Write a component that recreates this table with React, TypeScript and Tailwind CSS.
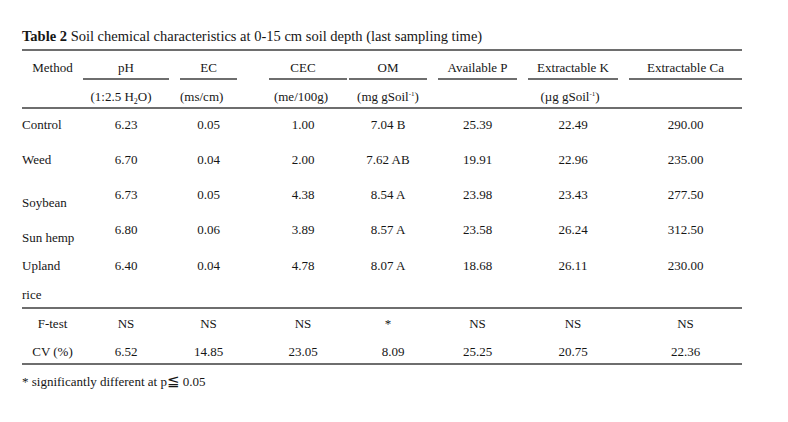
import React from "react";

const COLS = [
  "w-[61px] shrink-0",
  "w-[86px] shrink-0",
  "ml-[11px] w-[57px] shrink-0",
  "ml-[32px] w-[78px] shrink-0",
  "ml-[2px] w-[78px] shrink-0",
  "ml-[11px] w-[79px] shrink-0",
  "ml-[11px] w-[90px] shrink-0",
  "ml-[11px] w-[113px] shrink-0",
];

type Row = { label: string; vals: string[]; labelDrop?: boolean; h: string };

const ROWS: Row[] = [
  { label: "Control", vals: ["6.23", "0.05", "1.00", "7.04 B", "25.39", "22.49", "290.00"], h: "h-[35px]" },
  { label: "Weed", vals: ["6.70", "0.04", "2.00", "7.62 AB", "19.91", "22.96", "235.00"], h: "h-[35px]" },
  { label: "Soybean", vals: ["6.73", "0.05", "4.38", "8.54 A", "23.98", "23.43", "277.50"], labelDrop: true, h: "h-[35px]" },
  { label: "Sun hemp", vals: ["6.80", "0.06", "3.89", "8.57 A", "23.58", "26.24", "312.50"], labelDrop: true, h: "h-[36px]" },
  { label: "Upland", vals: ["6.40", "0.04", "4.78", "8.07 A", "18.68", "26.11", "230.00"], h: "h-[37px]" },
];

const Line = () => <div className="h-[2px] w-full bg-[#6e6e6e]" />;

function Cell({ i, children, extra = "" }: { i: number; children?: React.ReactNode; extra?: string }) {
  return <div className={`${COLS[i]} text-center leading-[16px] whitespace-nowrap ${extra}`}>{children}</div>;
}

function Head({ i, children, extra = "" }: { i: number; children: React.ReactNode; extra?: string }) {
  return (
    <div className={COLS[i]}>
      <div className={`text-center leading-[16px] whitespace-nowrap ${extra}`}>{children}</div>
      <div className="mt-[2px] h-[1.5px] bg-[#6e6e6e]" />
    </div>
  );
}

export default function App() {
  return (
    <div className="w-[788px] h-[422px] bg-white text-[#161616] text-[13px]" style={{ fontFamily: '"Liberation Serif", "Times New Roman", serif' }}>
      <div className="pl-[22px] pt-[28px] w-[742px]">
        <div className="h-[16px] leading-[16px] text-[14.5px] whitespace-nowrap">
          <span className="font-bold">Table 2</span> Soil chemical characteristics at 0-15 cm soil depth (last sampling time)
        </div>
        <div className="mt-[5px]">
          <Line />
        </div>
        {/* header row 1 */}
        <div className="flex pt-[9px]">
          <Cell i={0}>Method</Cell>
          <Head i={1}>pH</Head>
          <Head i={2}>EC</Head>
          <Head i={3} extra="pr-[10px]">CEC</Head>
          <Head i={4}>OM</Head>
          <Head i={5}>Available P</Head>
          <Head i={6}>Extractable K</Head>
          <Head i={7}>Extractable Ca</Head>
        </div>
        {/* header row 2 */}
        <div className="flex pt-[9px] pb-[2px]">
          <Cell i={0} />
          <Cell i={1} extra="pr-[10px]">
            (1:2.5 H<sub className="text-[8px] align-baseline relative top-[3px]">2</sub>O)
          </Cell>
          <Cell i={2} extra="pr-[14px]">(ms/cm)</Cell>
          <Cell i={3} extra="pr-[14px]">(me/100g)</Cell>
          <Cell i={4}>
            (mg gSoil<sup className="text-[7px] align-baseline relative -top-[5px]">-1</sup>)
          </Cell>
          <Cell i={5} />
          <Cell i={6} extra="pr-[6px]">
            (µg gSoil<sup className="text-[7px] align-baseline relative -top-[5px]">-1</sup>)
          </Cell>
          <Cell i={7} />
        </div>
        <Line />
        {ROWS.map((r) => (
          <div key={r.label} className={`flex pt-[8px] ${r.h}`}>
            <div className={`${COLS[0]} leading-[16px] whitespace-nowrap ${r.labelDrop ? "pt-[8px]" : ""}`}>{r.label}</div>
            {r.vals.map((v, j) => (
              <Cell key={j} i={j + 1} extra={j === 2 ? "pr-[10px]" : ""}>
                {v}
              </Cell>
            ))}
          </div>
        ))}
        <div className="leading-[16px] pb-[4px]">rice</div>
        <Line />
        <div className="flex pt-[7px] h-[28px]">
          <Cell i={0}>F-test</Cell>
          <Cell i={1}>NS</Cell>
          <Cell i={2}>NS</Cell>
          <Cell i={3} extra="pr-[10px]">NS</Cell>
          <Cell i={4}>*</Cell>
          <Cell i={5}>NS</Cell>
          <Cell i={6}>NS</Cell>
          <Cell i={7}>NS</Cell>
        </div>
        <div className="flex pt-[7px] h-[26px]">
          <Cell i={0}>CV (%)</Cell>
          <Cell i={1}>6.52</Cell>
          <Cell i={2}>14.85</Cell>
          <Cell i={3} extra="pr-[10px]">23.05</Cell>
          <Cell i={4} extra="pl-[10px]">8.09</Cell>
          <Cell i={5}>25.25</Cell>
          <Cell i={6}>20.75</Cell>
          <Cell i={7}>22.36</Cell>
        </div>
        <Line />
        <div className="pt-[8px] leading-[16px] whitespace-nowrap">
          * significantly different at p
          <span className="text-[15px] font-[DejaVu_Sans]">≦</span> 0.05
        </div>
      </div>
    </div>
  );
}
